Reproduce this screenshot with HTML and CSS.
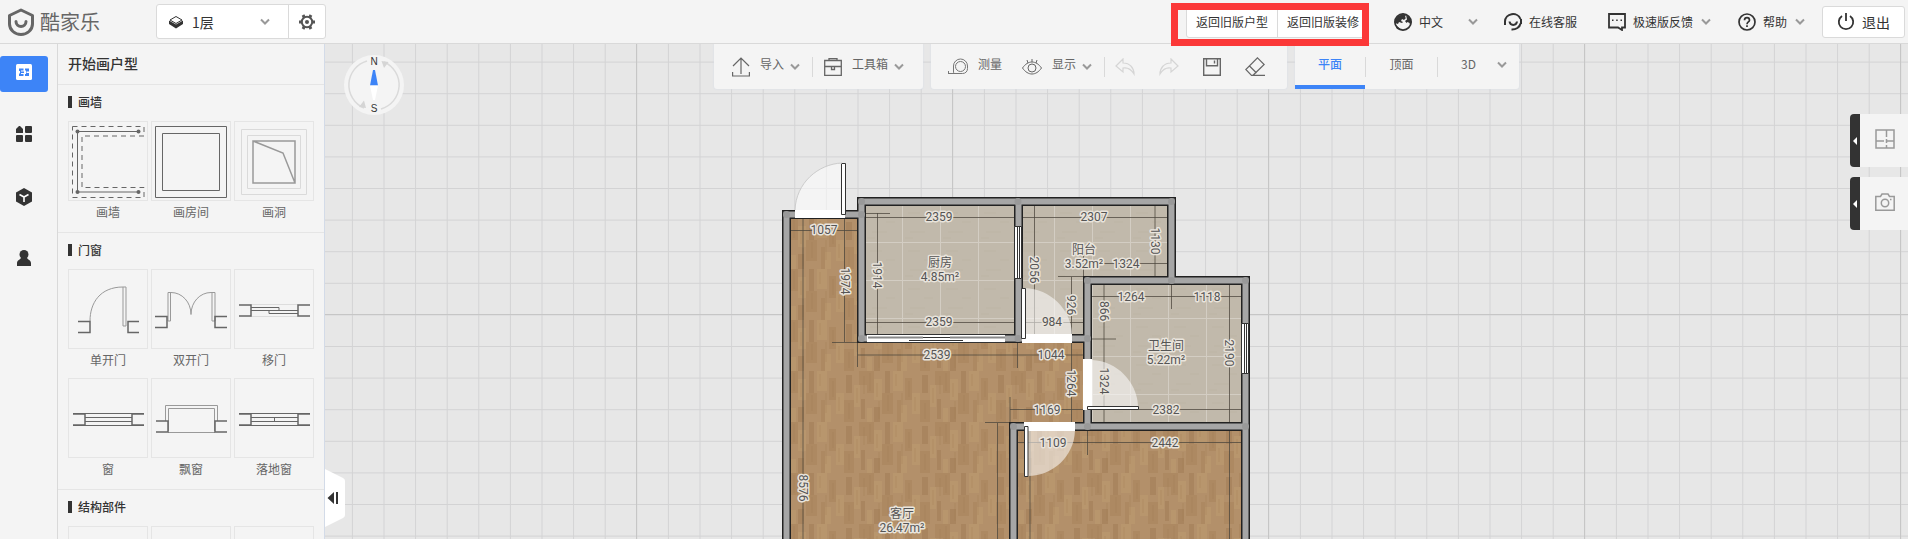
FILE: index.html
```html
<!DOCTYPE html>
<html lang="zh-CN">
<head>
<meta charset="utf-8">
<title>酷家乐</title>
<link rel="stylesheet" href="styles.css">
</head>
<body>
<svg class="defs" aria-hidden="true">
  <symbol id="chev" viewBox="0 0 10 8"><path d="M1 1.500l4 4 4-4" fill="none" stroke="currentColor" stroke-width="2"/></symbol>
</svg>
<div class="app">
  <header class="header">
    <a class="logo" href="#">
      <svg width="28" height="28" viewBox="0 0 28 28" fill="none" stroke="#666" stroke-width="3"><path d="M14 2L25.500 7.500V16C25.500 22 20 26.500 14 26.500S2.500 22 2.500 16V7.500z" stroke-linejoin="round"/><path d="M9 13.500c0 6.500 10 6.500 10 0" stroke-linecap="round"/></svg>
      <span>酷家乐</span>
    </a>
    <div class="floor">
      <label class="floor-pick">
        <svg width="14" height="14" viewBox="0 0 14 14"><path d="M7 1.500L13 5 7 8.500 1 5z" fill="#fff" stroke="#333"/><path d="M0 5.500v3.500L7 13.500 14 9V5.500L7 9.500z" fill="#333"/></svg>
        <select aria-label="楼层"><option>1层</option></select>
        <svg class="chev" width="10" height="8"><use href="#chev"/></svg>
      </label>
      <button class="gear" aria-label="设置">
        <svg width="16" height="16" viewBox="0 0 16 16"><g fill="none" stroke="#555"><circle cx="8" cy="8" r="5.200" stroke-width="2"/><g stroke-width="3"><path d="M13 8h3M0 8h3M10.500 3.700L12 1.100M4 14.900l1.500-2.600M5.500 3.700L4 1.100M12 14.900l-1.500-2.600"/></g></g><circle cx="8" cy="8" r="2" fill="#555"/></svg>
      </button>
    </div>
    <div class="old">
      <button>返回旧版户型</button><button>返回旧版装修</button>
      <span class="mark"></span>
    </div>
    <label class="item lang">
      <svg width="18" height="18" viewBox="0 0 18 18"><circle cx="9" cy="9" r="8.100" fill="#f4f4f4" stroke="#333" stroke-width="1.800"/><path d="M1 10V7l3-4 5-2 3 1-1 2 1 1-2 2-2-1-1 2 2 1-1 1-3-1-1 2zM12 2l4 3 1.500 4-1 4-1-3-2-1-1 1-1.500-2 2-1.500zM1 11l3 3 3 3-4-1z" fill="#333"/></svg>
      <select aria-label="语言"><option>中文</option></select>
      <svg class="chev" width="10" height="8"><use href="#chev"/></svg>
    </label>
    <button class="item service">
      <svg width="18" height="18" viewBox="0 0 18 18" fill="none" stroke="#333" stroke-width="2"><path d="M1 12V8.500A8 7.500 0 0 1 16.500 6M17 6v5M16.500 10.500A8.500 7 0 0 1 7.500 16.500"/><path d="M5.500 8.500c.5 4.500 7 4.500 7.500 0"/></svg>
      <span>在线客服</span>
    </button>
    <button class="item feedback">
      <svg width="18" height="18" viewBox="0 0 18 18"><path d="M1 1h16v13.500h-3V17l-4-2.500H1z" fill="none" stroke="#333" stroke-width="1.800"/><path d="M4 6.500h1.500v1.500H4zM8.200 6.500h1.500v1.500H8.200zM12.500 6.500H14v1.500h-1.500z" fill="#333"/></svg>
      <span>极速版反馈</span>
      <svg class="chev" width="10" height="8"><use href="#chev"/></svg>
    </button>
    <button class="item help">
      <svg width="18" height="18" viewBox="0 0 18 18" fill="none" stroke="#333" stroke-width="1.700"><circle cx="9" cy="9" r="8"/><path d="M6.500 7.200c0-3.400 5-3.400 5 0 0 1.700-2.500 1.800-2.500 4M9 12.300v1.700"/></svg>
      <span>帮助</span>
      <svg class="chev" width="10" height="8"><use href="#chev"/></svg>
    </button>
    <button class="exit">
      <svg width="18" height="18" viewBox="0 0 18 18" fill="none" stroke="#333" stroke-width="1.800"><path d="M5 3A7.200 7.200 0 1 0 13 3M9 0v8"/></svg>
      <span>退出</span>
    </button>
  </header>

  <div class="body">
    <nav class="rail">
      <button class="on" aria-label="户型"><svg width="16" height="16" viewBox="0 0 16 16"><rect width="16" height="16" rx="1.500" fill="#fff"/><path d="M3 4.500h4.500v2H5V7.500h3v1.500H5v1h2.500v2H3V9.500h1V7H3zM9 4.500h4v3h-2.500v1.500H13v3H9v-2h1V6.500H9z" fill="#3d84f7"/></svg></button>
      <button aria-label="组件"><svg width="16" height="16" viewBox="0 0 16 16" fill="#333"><path d="M0 7V3l3-3h1l3 3v4z"/><rect x="9" width="7" height="7" rx="1"/><rect y="9" width="7" height="7" rx="1"/><rect x="9" y="9" width="7" height="7" rx="1"/></svg></button>
      <button aria-label="模型"><svg width="16" height="18" viewBox="0 0 16 18"><path d="M8 0l8 4.500v9L8 18l-8-4.500v-9z" fill="#333"/><path d="M3.500 6.500L8 9l4.500-2.500M8 9v5" stroke="#fff" stroke-width="1.600" fill="none"/></svg></button>
      <button aria-label="我的"><svg width="16" height="16" viewBox="0 0 16 16" fill="#333"><circle cx="8" cy="4.500" r="4.500"/><path d="M5.500 7h5c0 2 4.500 3 4.500 6v3H1v-3c0-3 4.500-4 4.500-6z"/></svg></button>
    </nav>

    <aside class="panel">
      <h1>开始画户型</h1>
      <section>
        <h2>画墙</h2>
        <div class="cards">
          <button class="card"><svg viewBox="0 0 80 80" fill="none" stroke="#666"><path d="M4.500 5.500h71.500v9.500h-62v51.500h62v10H4.500z" stroke-dasharray="5 4"/><path d="M70.500 10.500h-61v60.500h61"/><g fill="#666" stroke="none"><circle cx="9.500" cy="10.500" r="2"/><circle cx="70.500" cy="10.500" r="2"/><circle cx="9.500" cy="71" r="2"/><circle cx="70.500" cy="71" r="2"/></g></svg><span>画墙</span></button>
          <button class="card"><svg viewBox="0 0 80 80" fill="none" stroke="#666"><path d="M4.500 5.500h71v71h-71zM11.500 12.500h57v57h-57z"/></svg><span>画房间</span></button>
          <button class="card"><svg viewBox="0 0 80 80" fill="none"><path d="M7.500 8.500h65v65h-65zM13.500 14.500h53v53h-53z" stroke="#dadada"/><path d="M19 20h42v42H19zL49 32 61 62" stroke="#999" stroke-width="1.500"/></svg><span>画洞</span></button>
        </div>
      </section>
      <section>
        <h2>门窗</h2>
        <div class="cards">
          <button class="card"><svg viewBox="0 0 80 80" fill="none" stroke="#999"><path d="M22 52C22 34 32 18 55 18h3v39h-3V18"/><path d="M10 52.500h12v11H10M71 52.500H60v11h11" stroke="#666" stroke-width="1.500"/></svg><span>单开门</span></button>
          <button class="card"><svg viewBox="0 0 80 80" fill="none" stroke="#999"><path d="M17 52V23.500h3C31 23.500 40 33 40 45.500 40 33 49 23.500 60 23.500h4V52h-3V24M17 52h2.500V24"/><path d="M4 47.500h12v11H4M76 47.500H64v11h12" stroke="#666" stroke-width="1.500"/></svg><span>双开门</span></button>
          <button class="card"><svg viewBox="0 0 80 80" fill="none" stroke="#666"><path d="M16 35.500h48M16 47.500h48" stroke="#ddd"/><path d="M17 38.500h28v3H17M64 44.500H35v-3h29"/><path d="M5 36h12v11H5M76 36H64v11h12" stroke-width="1.500"/></svg><span>移门</span></button>
          <button class="card"><svg viewBox="0 0 80 80" fill="none" stroke="#666"><path d="M5 35.500h71M5 47.500h71M17 39.500h47M17 43.500h47"/><path d="M5 36h12v11H5M76 36H64v11h12" stroke-width="1.500"/></svg><span>窗</span></button>
          <button class="card"><svg viewBox="0 0 80 80" fill="none" stroke="#999"><path d="M14.500 43V27.500h52V43M17.500 53V30.500h46V53M17 54.500h47"/><path d="M5 43h12v11H5M76 43H64v11h12" stroke="#666" stroke-width="1.500"/></svg><span>飘窗</span></button>
          <button class="card"><svg viewBox="0 0 80 80" fill="none" stroke="#666"><path d="M5 35.500h71M5 47.500h71M17 39.500h47M17 43.500h47M40.500 39v4"/><path d="M5 36h12v11H5M76 36H64v11h12" stroke-width="1.500"/></svg><span>落地窗</span></button>
        </div>
      </section>
      <section>
        <h2>结构部件</h2>
        <div class="cards">
          <button class="card" aria-label="柱子"><svg viewBox="0 0 80 80"></svg></button>
          <button class="card" aria-label="烟道"><svg viewBox="0 0 80 80"></svg></button>
          <button class="card" aria-label="梁"><svg viewBox="0 0 80 80"></svg></button>
        </div>
      </section>
    </aside>

    <main class="stage">
      <svg class="plan" viewBox="325 44 1583 495" preserveAspectRatio="xMinYMin slice">
        <defs>
          <pattern id="grid" x="4.300" y="30" width="31.600" height="31.600" patternUnits="userSpaceOnUse"><path d="M0 .5H32M.5 0V32" stroke="#d3d3d4" fill="none"/></pattern>
          <pattern id="wood" x="791" y="218" width="76" height="51" patternUnits="userSpaceOnUse">
            <rect width="76" height="51" fill="#b3906a"/>
            <g fill="#ad8962"><path d="M0 0h7v22H0zM15 22h11v21H15zM38 7h7v22h-7zM53 29h10v22H53zM68 0h8v14h-8zM30 29h4v22h-4z"/></g>
            <g fill="#b8966d"><path d="M7 8h8v21H7zM26 0h10v20H26zM45 22h8v21h-8zM63 14h6v22h-6zM34 34h6v17h-6zM0 37h5v14H0z"/></g>
            <g fill="#a9855f"><path d="M18 0h5v22h-5zM55 4h6v18h-6zM7 36h6v15H7zM70 28h4v20h-4z"/></g>
            <path d="M3 2v18M10 12v14M12 30v18M21 24v16M29 3v12M35 22v20M42 10v16M48 26v14M58 32v16M66 17v15M73 5v18" stroke="#9c774f" opacity=".35"/>
          </pattern>
          <pattern id="tile" x="902" y="204" width="38" height="38" patternUnits="userSpaceOnUse"><rect width="38" height="38" fill="#c1b9ab"/><path d="M6 9h12M22 18h9M8 28h15M3 34h8" stroke="#bdb5a6"/><path d="M0 .5h38M.5 0v38" stroke="#d3cdc3"/></pattern>
        </defs>
        <rect x="325" y="44" width="1583" height="495" fill="#e7e7e7"/>
        <rect x="325" y="44" width="1583" height="495" fill="url(#grid)"/>
        <path d="M636.500 44v495M952.500 44v495M1268.500 44v495M1584.500 44v495M1900.500 44v495M325 314.500h1583" stroke="#c6c6c6"/>

        <path d="M787 214H862V339H1088V427H1246V545H787z" fill="url(#wood)"/>
        <path d="M862 202h309v79h75v146h-158v-88H862z" fill="url(#tile)"/>

        <g fill="none" stroke="#4b453c" stroke-opacity=".75">
          <path d="M865 217.500h149M865 322.500h149M877.500 213v122M865 213.500h25M791 230.500h66M803 218v321M844.500 218v124M832 342.500h25M857.500 355h226M857.500 343v24M1017.500 343v25M1071.500 343v79M1010 409.500h73M1010 397v25M985 422.500h25M997.500 423v116M1018 442.500h223M1087.500 430v25M1030 430v109M1229.500 430v109M1091 409.500h150M1104 284v138M1091 339h25M1091 296.500h150M1171.500 284v25M1229.500 284v138M1071.500 277v58M1022 322.500h61M1058 276.500h25M1022 217.500h145M1034.500 205v130M1155 205v71M1083 263.500h84M1083.500 255v21"/>
        </g>

        <g fill="none" stroke-linejoin="miter" stroke-linecap="square">
          <path d="M786.500 545V214.500H861.500M861.500 338.500V201.500H1171.500V280.500M1018.500 201.500V338.500M861.500 338.500H1087.500M1087.500 426.500V280.500H1245.500V545M1013.500 545V426.500H1245.500" stroke="#222" stroke-width="9"/>
          <path d="M786.500 545V214.500H861.500M861.500 338.500V201.500H1171.500V280.500M1018.500 201.500V338.500M861.500 338.500H1087.500M1087.500 426.500V280.500H1245.500V545M1013.500 545V426.500H1245.500" stroke="#a6a6a6" stroke-width="6"/>
        </g>
        <g fill="#999"><circle cx="786.500" cy="214.500" r="3.500"/><circle cx="861.500" cy="214.500" r="3.500"/><circle cx="861.500" cy="201.500" r="3.500"/><circle cx="1018" cy="201.500" r="3.500"/><circle cx="1171.500" cy="201.500" r="3.500"/><circle cx="1171.500" cy="280.500" r="3.500"/><circle cx="1245.500" cy="280.500" r="3.500"/><circle cx="1087.500" cy="280.500" r="3.500"/><circle cx="1087.500" cy="338.500" r="3.500"/><circle cx="1018" cy="338.500" r="3.500"/><circle cx="861.500" cy="338.500" r="3.500"/><circle cx="1087.500" cy="426.500" r="3.500"/><circle cx="1245.500" cy="426.500" r="3.500"/><circle cx="1013.500" cy="426.500" r="3.500"/></g>

        <g fill="#fff">
          <path d="M795 210h50v8h-50zM1022 334h50v9h-50zM1083 359h9v51h-9zM1024 422h51v9h-51zM867 334h138v9H867z"/>
          <g fill-opacity=".55">
            <path d="M795 210C796 183 818 164 842 163V210z"/>
            <path d="M1025 288C1050 289 1071 309 1072 334H1025z"/>
            <path d="M1092 360C1117 361 1137 382 1138 406H1092z"/>
            <path d="M1075 431C1074 456 1053 476 1028 476V431z"/>
          </g>
          <g stroke="#333"><path d="M841.500 163.500h4v51h-4zM1021.500 288.500h4v50h-4zM1087.500 406.500h51v3h-51zM1024.500 426.500h3.500v50h-3.500zM1014.500 226.500h7v52h-7zM1241.500 323.500h7v50h-7z"/><path d="M1017.500 227v51M1019.500 227v51M1244.500 324v50M1246.500 324v50M909 340.500h54M923 337.500h27M867 342.500h138M867 334.500h138" fill="none"/></g>
          <path d="M868 337.500h55M950 337.500h55" stroke="#888" stroke-width="2"/>
        </g>
        <path d="M795 210C796 183 818 164 842 163" fill="none" stroke="#ccc"/>

        <g class="dims">
          <text x="939" y="221">2359</text><text x="939" y="326">2359</text><text x="824" y="234">1057</text>
          <text x="1094" y="221">2307</text><text x="1126" y="268">1324</text><text x="1052" y="326">984</text>
          <text x="1131" y="301">1264</text><text x="1207" y="301">1118</text><text x="1051" y="359">1044</text>
          <text x="1047" y="414">1169</text><text x="1166" y="414">2382</text><text x="1053" y="447">1109</text>
          <text x="1165" y="447">2442</text><text x="937" y="359">2539</text>
          <text transform="translate(841 281)rotate(90)">1974</text><text transform="translate(873 275)rotate(90)">1914</text>
          <text transform="translate(1151 241)rotate(90)">1130</text><text transform="translate(1030 270)rotate(90)">2056</text>
          <text transform="translate(1067 305)rotate(90)">926</text><text transform="translate(1100 311)rotate(90)">866</text>
          <text transform="translate(1225 353)rotate(90)">2190</text><text transform="translate(1067 383)rotate(90)">1264</text>
          <text transform="translate(1100 381)rotate(90)">1324</text><text transform="translate(799 488)rotate(90)">8576</text>
          <text x="940" y="267">厨房</text><text x="940" y="281">4.85m²</text>
          <text x="1084" y="254">阳台</text><text x="1084" y="268">3.52m²</text>
          <text x="1166" y="350">卫生间</text><text x="1166" y="364">5.22m²</text>
          <text x="902" y="518">客厅</text><text x="902" y="532">26.47m²</text>
        </g>
      </svg>

      <div class="toolbar">
        <div class="group g1">
          <button><svg width="18" height="20" viewBox="0 0 18 20" fill="none" stroke="#666" stroke-width="1.200"><path d="M9 17V1.500M1 9l8-8 8 8M.6 15v4h16.800v-4"/></svg><span>导入</span><svg class="chev" width="10" height="8"><use href="#chev"/></svg></button>
          <i></i>
          <button><svg width="18" height="18" viewBox="0 0 18 18" fill="none" stroke="#666" stroke-width="1.300"><path d="M.7 2.500h16.600v14.800H.7zM5 2.500V.7h8v1.800M.7 8.500h16.600M7.500 8.500v3h3v-3"/></svg><span>工具箱</span><svg class="chev" width="10" height="8"><use href="#chev"/></svg></button>
        </div>
        <div class="group g2">
          <button><svg width="20" height="18" viewBox="0 0 20 18" fill="none" stroke="#777"><path d="M0 15.500h14.500c3 0 5-2 5-5V8a7 7 0 0 0-14 0v6c0 1 .5 1.500 1.500 1.500M.5 13v3"/><circle cx="12.500" cy="8.500" r="5"/></svg><span>测量</span></button>
          <button class="show"><svg width="20" height="18" viewBox="0 0 20 18" fill="none" stroke="#666"><path d="M.5 10C6 2 14 2 19.500 10 14 18 6 18 .5 10z"/><circle cx="10" cy="10" r="4"/><path d="M5 2l1 3M10 1v3M15 2l-1 3"/></svg><span>显示</span><svg class="chev" width="10" height="8"><use href="#chev"/></svg></button>
          <i></i>
          <button aria-label="撤销"><svg width="20" height="18" viewBox="0 0 20 18" fill="none" stroke="#d5d5d5" stroke-width="1.200"><path d="M8 1L1 8l7 6v-4c5-1 8 1 11 6 0-6-4-11-11-11z"/></svg></button>
          <button class="redo" aria-label="重做"><svg width="20" height="18" viewBox="0 0 20 18" fill="none" stroke="#d5d5d5" stroke-width="1.200"><path d="M12 1l7 7-7 6v-4C7 9 4 11 1 16 1 10 5 5 12 5z"/></svg></button>
          <button class="save" aria-label="保存"><svg width="18" height="18" viewBox="0 0 18 18" fill="none" stroke="#666" stroke-width="1.400"><path d="M.7.7h16.600v16.600H.7zM3.500.7v7h11v-7M11.500 2.500v3"/></svg></button>
          <button class="save" aria-label="清空"><svg width="20" height="19" viewBox="0 0 20 19" fill="none" stroke="#666" stroke-width="1.200"><path d="M12.500.8l6.700 6.700L8 18.300H6.500L.8 12.500zM4.500 9l7 7M7 18.300h13"/></svg></button>
        </div>
        <div class="group g3">
          <button class="tab on"><span>平面</span></button><i></i><button class="tab"><span>顶面</span></button><i></i><button class="tab three"><span>3D</span><svg class="chev" width="10" height="8"><use href="#chev"/></svg></button>
        </div>
      </div>

      <div class="compass">
        <svg width="60" height="60" viewBox="0 0 60 60"><circle cx="30" cy="30" r="30" fill="#f4f4f4"/><path d="M23 6A25 25 0 0 0 20 53M37 54A25 25 0 0 0 40 7" fill="none" stroke="#dadada" stroke-width="1.500"/><path d="M37.500 6l7 1-4.500 6zM22 53l-7-1 5-6.500z" fill="#d5d5d5"/><path d="M29 15h2l3 15.500h-8z" fill="#3d84f7"/><path d="M26 30.500h8L31 45h-2z" fill="#fff"/><text x="30" y="10">N</text><text x="30" y="57">S</text></svg>
      </div>
      <button class="fold" aria-label="收起"><svg width="20" height="58" viewBox="0 0 20 58"><path d="M0 0l18 9q2 1 2 3v34q0 2-2 3L0 58z" fill="#fff"/><path d="M2.500 29L9 23v12zM11 23h2v12h-2z" fill="#333"/></svg></button>
      <div class="side">
        <button aria-label="小地图"><span class="grip"><svg width="4" height="8" viewBox="0 0 4 8"><path d="M4 0v8L0 4z" fill="#fff"/></svg></span><svg width="20" height="20" viewBox="0 0 20 20" fill="none" stroke="#999" stroke-width="1.500"><path d="M1 1h18v18H1zM11.500 1v7M11.500 10v4M11.500 16v3M1 12h8M11.500 12h7.500"/></svg></button>
        <button aria-label="相机"><span class="grip"><svg width="4" height="8" viewBox="0 0 4 8"><path d="M4 0v8L0 4z" fill="#fff"/></svg></span><svg width="20" height="18" viewBox="0 0 20 18" fill="none" stroke="#999" stroke-width="1.500"><path d="M.8 3.500h4.700L7 1h6l1.500 2.500h4.700v13.700H.8z"/><circle cx="10" cy="10" r="3.700"/><path d="M15 6.500h1.500"/></svg></button>
      </div>
    </main>
  </div>
</div>
</body>
</html>
```
FILE: styles.css
```css
* { box-sizing: border-box; }
body {
  margin: 0;
  font: 12px/16px "Noto Sans CJK SC", "Noto Sans", sans-serif;
  color: #333;
}
button, select {
  margin: 0;
  padding: 0;
  border: 0;
  background: none;
  font: inherit;
  color: inherit;
  appearance: none;
  cursor: pointer;
}
h1, h2 { margin: 0; }
svg { display: block; flex: none; }
.defs { position: absolute; width: 0; height: 0; }
.chev { color: #999; }

.app {
  display: flex;
  flex-direction: column;
  height: 100vh;
  overflow: hidden;
  background: #f4f4f4;
}

/* header */
.header {
  position: relative;
  z-index: 2;
  display: flex;
  flex: none;
  align-items: center;
  height: 44px;
  padding-right: 3px;
  border-bottom: 1px solid #d9d9d9;
  background: #f4f4f4;
}
.logo {
  display: flex;
  align-items: center;
  gap: 5px;
  width: 156px;
  padding-left: 7px;
  color: #666;
  font-size: 20px;
  line-height: 28px;
  text-decoration: none;
}
.floor {
  display: flex;
  width: 170px;
  height: 35px;
  border: 1px solid #dadada;
  border-radius: 3px;
  background: #fff;
}
.floor-pick {
  display: flex;
  flex: 1;
  align-items: center;
  padding: 0 18px 0 12px;
  font-size: 14px;
}
.floor-pick select { flex: 1; padding-left: 9px; }
.gear {
  display: flex;
  align-items: center;
  justify-content: center;
  width: 37px;
  border-left: 1px solid #dadada;
}
.old {
  position: relative;
  display: flex;
  height: 32px;
  margin-left: auto;
  border: 1px solid #dadada;
  border-radius: 3px;
  background: #fff;
}
.old button { padding: 0 9px; }
.old button + button { border-left: 1px solid #dadada; }
.mark {
  position: absolute;
  inset: -4px -1px -9px -16px;
  border: 7px solid #fb3838;
}
.item { display: flex; align-items: center; gap: 7px; }
.item .chev { margin-left: 1px; }
.lang { margin-left: 25px; }
.lang .chev { margin-left: 17px; }
.service { margin-left: 26px; }
.feedback { margin-left: 31px; }
.help { margin-left: 27px; }
.exit {
  display: flex;
  align-items: center;
  justify-content: center;
  gap: 7px;
  width: 83px;
  height: 32px;
  margin-left: 17px;
  border: 1px solid #dadada;
  border-radius: 3px;
  background: #fff;
  font-size: 14px;
}

/* left side */
.body { display: flex; flex: 1; min-height: 0; }
.rail {
  display: flex;
  flex: none;
  flex-direction: column;
  gap: 26px;
  width: 58px;
  padding-top: 12px;
  border-right: 1px solid #d9d9d9;
}
.rail button {
  display: flex;
  justify-content: center;
  width: 48px;
  height: 36px;
  padding-top: 8px;
  border-radius: 3px;
}
.rail .on { background: #3d84f7; }
.panel {
  flex: none;
  width: 267px;
  overflow: hidden;
  border-right: 1px solid #d3dbe8;
}
.panel h1 {
  height: 41px;
  padding-left: 10px;
  border-bottom: 1px solid #e5e5e5;
  font-size: 14px;
  font-weight: 500;
  line-height: 38px;
}
.panel section { padding-bottom: 7px; border-bottom: 1px solid #e5e5e5; }
.panel h2 {
  display: flex;
  align-items: center;
  gap: 6px;
  height: 36px;
  padding: 0 0 2px 10px;
  font-size: 12px;
  font-weight: 500;
}
.panel h2::before { content: ""; width: 4px; height: 12px; background: #333; }
.cards {
  display: grid;
  grid-template-columns: repeat(3, 80px);
  gap: 5px 3px;
  padding-left: 10px;
}
.card { color: #666; line-height: 22px; }
.card svg { width: 80px; height: 80px; outline: 1px solid #e5e5e5; outline-offset: -1px; }
.card span { display: block; padding-bottom: 2px; }

/* canvas */
.stage { position: relative; flex: 1; min-width: 0; overflow: hidden; background: #e7e7e7; }
.plan { position: absolute; inset: 0; width: 100%; height: 100%; }
.dims text {
  fill: #555;
  stroke: #e9e4dc;
  stroke-width: 3px;
  stroke-linejoin: round;
  paint-order: stroke;
  font: 12px Roboto, "Noto Sans CJK SC", sans-serif;
  text-anchor: middle;
}
.toolbar {
  position: relative;
  display: flex;
  justify-content: center;
  gap: 8px;
  color: #666;
}
.group {
  display: flex;
  align-items: center;
  height: 45px;
  border-radius: 0 0 3px 3px;
  background: #f4f4f4;
  box-shadow: 0 0 2px #d3dbe8;
}
.group i { width: 1px; height: 20px; background: #d9d9d9; }
.group button { display: flex; align-items: center; }
.group span { padding-bottom: 6px; }
.group button svg + span { margin-left: 10px; }
.group span + .chev { margin-left: 6px; }
.g1 { padding: 0 19px 0 18px; }
.g1 i { margin: 0 11px 0 12px; }
.g2 { padding: 0 22px 0 17px; }
.g2 i { margin: 0 10px 0 12px; }
.g2 .show { margin-left: 20px; }
.redo { margin-left: 24px; }
.save { margin-left: 24px; }
.group .tab {
  justify-content: center;
  width: 71px;
  height: 45px;
  border-bottom: 4px solid transparent;
}
.group .on { width: 70px; border-color: #3d84f7; color: #3d84f7; font-weight: 500; }
.tab span { padding-bottom: 2px; }
.group .three { width: 81px; padding-left: 11px; }
.group .three .chev { margin-left: 21px; }

.compass { position: absolute; left: 19px; top: 11px; }
.compass text {
  font: 10px "Liberation Sans", sans-serif;
  fill: #333;
  text-anchor: middle;
}
.fold { position: absolute; left: 0; top: 425px; }
.side {
  position: absolute;
  right: 0;
  top: 70px;
  display: grid;
  gap: 10px;
}
.side button {
  display: flex;
  align-items: center;
  gap: 15px;
  width: 58px;
  height: 53px;
  border-radius: 4px 0 0 4px;
  background: #f4f4f4;
  overflow: hidden;
}
.side button > svg { margin-bottom: 4px; }
.grip {
  display: flex;
  align-items: center;
  justify-content: center;
  width: 10px;
  height: 100%;
  background: #333;
}
```
